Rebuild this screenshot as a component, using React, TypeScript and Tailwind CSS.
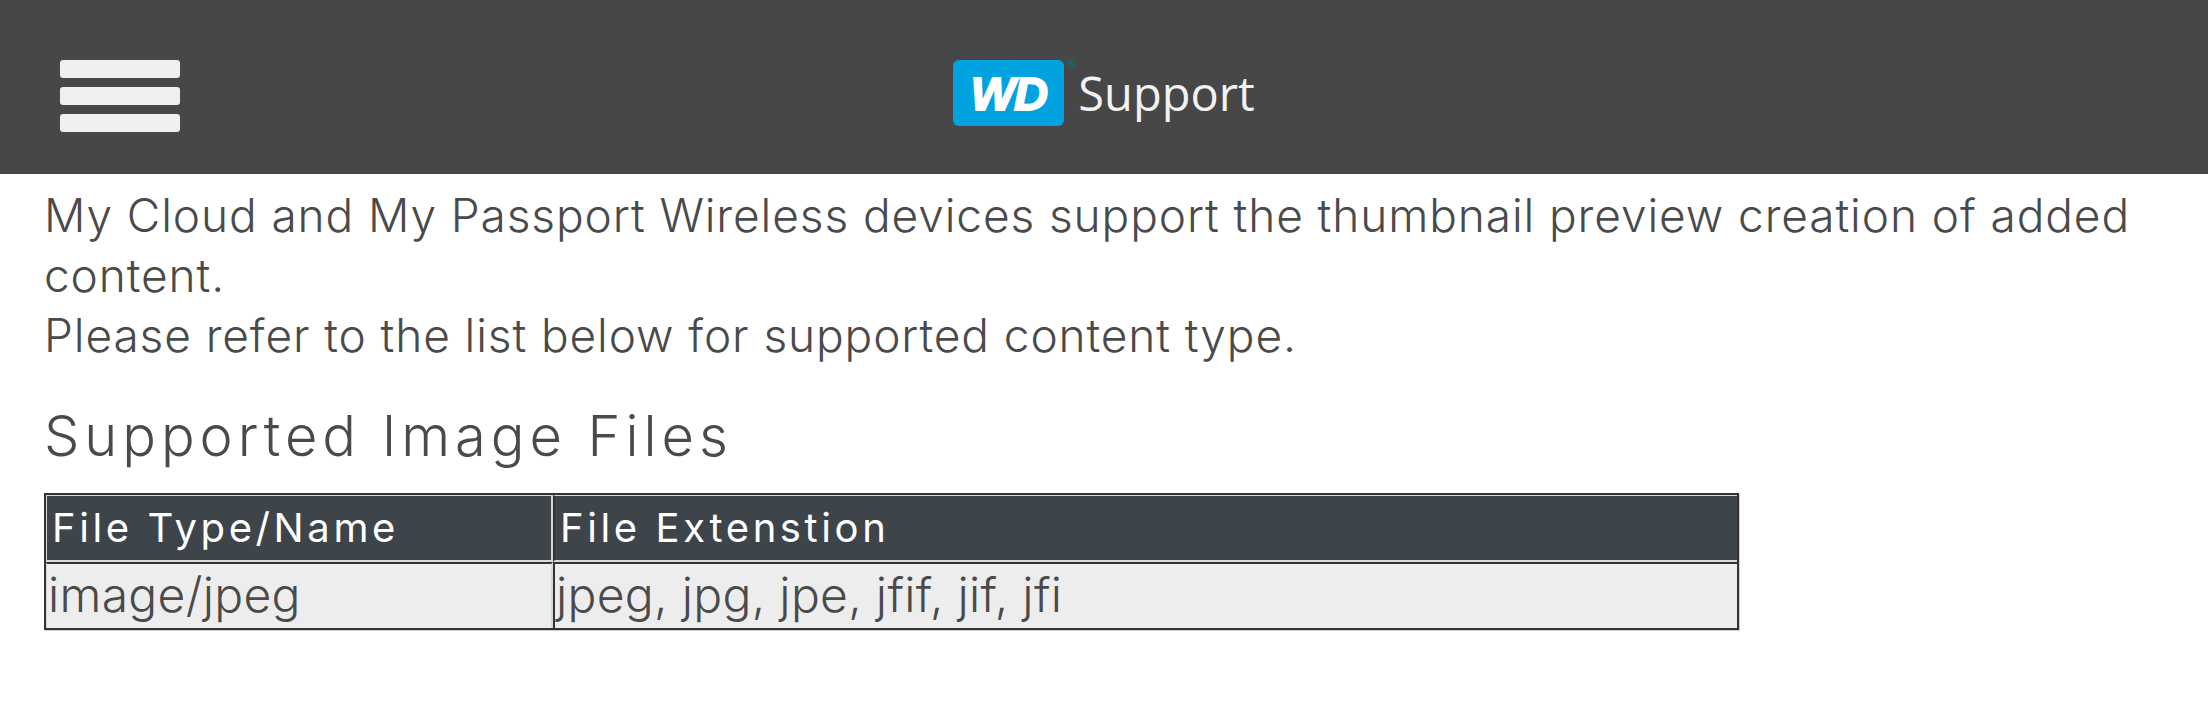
const rows = [["image/jpeg", "jpeg, jpg, jpe, jfif, jif, jfi"]]

function WdLogo() {
  return (
    <div className="relative flex h-[66px] w-[111px] items-center justify-center rounded-[6px] bg-[#00a3e0]">
      <span className="font-['Liberation_Sans',sans-serif] text-[47px] leading-none font-bold tracking-[-1px] text-white italic [-webkit-text-stroke:2px_white]">WD</span>
      <span className="absolute top-[-2px] right-[-11px] font-['Liberation_Sans',sans-serif] text-[11px] leading-none text-[#0b6f99]">®</span>
    </div>
  )
}

export default function App() {
  return (
    <div className="min-h-[707px] bg-white font-['Inter',sans-serif] font-light text-[#4a4a4a]">
      <header className="relative flex h-[174px] items-center justify-center bg-[#474747] pt-[12px]">
        <div className="absolute top-[60px] left-[60px] flex w-[120px] flex-col gap-[9px]">
          <span className="h-[18px] rounded-[3px] bg-[#f0f0f0]"></span>
          <span className="h-[18px] rounded-[3px] bg-[#f0f0f0]"></span>
          <span className="h-[18px] rounded-[3px] bg-[#f0f0f0]"></span>
        </div>
        <div className="flex items-center gap-[14px]">
          <WdLogo />
          <span className="font-['Open_Sans',sans-serif] text-[47px] leading-none font-normal text-[#f2f2f2]">Support</span>
        </div>
      </header>
      <main className="px-[44px]">
        <p className="pt-[11px] text-[46px] leading-[60px] tracking-[0.9px]">
          My Cloud and My Passport Wireless devices support the thumbnail preview creation of added content.
          <br />
          Please refer to the list below for supported content type.
        </p>
        <h2 className="mt-[37px] text-[56px] leading-[68px] font-light tracking-[4.95px]">Supported Image Files</h2>
        <table className="mt-[23px] w-[1695px] table-fixed border-separate border-spacing-0 border-2 border-[#333333] text-[48px] tracking-[0.3px] shadow-[1px_1px_0_#d0d0d0]">
          <thead>
            <tr>
              <th className="w-[507px] border-t border-r-2 border-b-2 border-l border-t-[#d8d8d8] border-r-[#d8d8d8] border-b-[#d8d8d8] border-l-[#d8d8d8] bg-[#3d454b] pl-[5px] text-left text-[40px] leading-[64px] font-normal tracking-[3.6px] text-white">File Type/Name</th>
              <th className="border-t border-b-2 border-l-2 border-t-[#d8d8d8] border-b-[#d8d8d8] border-l-[#333333] bg-[#3d454b] pl-[5px] text-left text-[40px] leading-[64px] font-normal tracking-[3.6px] text-white">File Extenstion</th>
            </tr>
          </thead>
          <tbody>
            {rows.map((row) => (
              <tr key={row[0]}>
                <td className="border-t-2 border-r-2 border-l border-t-[#333333] border-r-[#d8d8d8] border-l-[#d8d8d8] bg-[#ededed] pb-[3px] pl-[1px] leading-[61px]">{row[0]}</td>
                <td className="border-t-2 border-l-2 border-t-[#333333] border-l-[#333333] bg-[#ededed] pb-[3px] pl-[1px] leading-[61px]">{row[1]}</td>
              </tr>
            ))}
          </tbody>
        </table>
      </main>
    </div>
  )
}
